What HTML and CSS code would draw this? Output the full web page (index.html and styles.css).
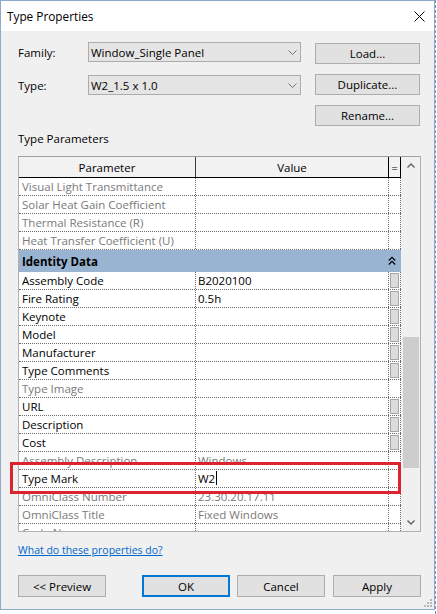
FILE: index.html
```html
<!DOCTYPE html>
<html>
<head>
<meta charset="utf-8">
<title>Type Properties</title>
<link rel="stylesheet" href="styles.css">
</head>
<body>
<div class="page">
  <div class="dialog">
    <div class="titlebar">
      <span class="title">Type Properties</span>
      <svg class="close" width="11" height="11" viewBox="0 0 11 11"><path d="M0.5 0.5 L10.5 10.5 M10.5 0.5 L0.5 10.5" stroke="#000" stroke-width="1" fill="none"/></svg>
    </div>
    <div class="content">
      <div class="toprow">
        <div class="fields">
          <div class="field">
            <span class="label">Family:</span>
            <div class="combo"><span class="combo-text">Window_Single Panel</span><svg class="chev" width="9" height="5" viewBox="0 0 9 5"><path d="M0.5 0.5 L4.5 4.5 L8.5 0.5" stroke="#707070" fill="none"/></svg></div>
          </div>
          <div class="field">
            <span class="label">Type:</span>
            <div class="combo"><span class="combo-text">W2_1.5 x 1.0</span><svg class="chev" width="9" height="5" viewBox="0 0 9 5"><path d="M0.5 0.5 L4.5 4.5 L8.5 0.5" stroke="#707070" fill="none"/></svg></div>
          </div>
        </div>
        <div class="sidebtns">
          <button class="btn side">Load...</button>
          <button class="btn side">Duplicate...</button>
          <button class="btn side">Rename...</button>
        </div>
      </div>
      <div class="section-label">Type Parameters</div>
      <div class="table">
        <div class="grid">
          <div class="hdr">
            <div class="h1">Parameter</div>
            <div class="h2">Value</div>
            <div class="h3">=</div>
          </div>
          <div class="row dim"><div class="c1">Visual Light Transmittance</div><div class="c2"></div><div class="c3"></div></div>
          <div class="row dim"><div class="c1">Solar Heat Gain Coefficient</div><div class="c2"></div><div class="c3"></div></div>
          <div class="row dim"><div class="c1">Thermal Resistance (R)</div><div class="c2"></div><div class="c3"></div></div>
          <div class="row dim"><div class="c1">Heat Transfer Coefficient (U)</div><div class="c2"></div><div class="c3"></div></div>
          <div class="group">
            <span class="group-name">Identity Data</span>
            <svg class="collapse" width="8" height="10" viewBox="0 0 8 10"><path d="M0.8 4.5 L4 1.3 L7.2 4.5 M0.8 8.5 L4 5.3 L7.2 8.5" stroke="#000" stroke-width="1.2" fill="none"/></svg>
          </div>
          <div class="row"><div class="c1">Assembly Code</div><div class="c2">B2020100</div><div class="c3"><span class="cellbtn"></span></div></div>
          <div class="row"><div class="c1">Fire Rating</div><div class="c2">0.5h</div><div class="c3"><span class="cellbtn"></span></div></div>
          <div class="row"><div class="c1">Keynote</div><div class="c2"></div><div class="c3"><span class="cellbtn"></span></div></div>
          <div class="row"><div class="c1">Model</div><div class="c2"></div><div class="c3"><span class="cellbtn"></span></div></div>
          <div class="row"><div class="c1">Manufacturer</div><div class="c2"></div><div class="c3"><span class="cellbtn"></span></div></div>
          <div class="row"><div class="c1">Type Comments</div><div class="c2"></div><div class="c3"><span class="cellbtn"></span></div></div>
          <div class="row dim"><div class="c1">Type Image</div><div class="c2"></div><div class="c3"></div></div>
          <div class="row"><div class="c1">URL</div><div class="c2"></div><div class="c3"><span class="cellbtn"></span></div></div>
          <div class="row"><div class="c1">Description</div><div class="c2"></div><div class="c3"><span class="cellbtn"></span></div></div>
          <div class="row"><div class="c1">Cost</div><div class="c2"></div><div class="c3"><span class="cellbtn"></span></div></div>
          <div class="row dim"><div class="c1">Assembly Description</div><div class="c2">Windows</div><div class="c3"></div></div>
          <div class="row"><div class="c1">Type Mark</div><div class="c2">W2<span class="caret"></span></div><div class="c3"></div></div>
          <div class="row dim"><div class="c1">OmniClass Number</div><div class="c2">23.30.20.17.11</div><div class="c3"></div></div>
          <div class="row dim"><div class="c1">OmniClass Title</div><div class="c2">Fixed Windows</div><div class="c3"></div></div>
          <div class="row dim"><div class="c1">Code Name</div><div class="c2"></div><div class="c3"></div></div>
        </div>
        <div class="scrollbar">
          <div class="sb-arrow"><svg width="8" height="5" viewBox="0 0 8 5"><path d="M0.5 4.5 L4 1 L7.5 4.5" stroke="#606060" stroke-width="1.4" fill="none"/></svg></div>
          <div class="sb-track"><div class="sb-thumb"></div></div>
          <div class="sb-arrow"><svg width="8" height="5" viewBox="0 0 8 5"><path d="M0.5 0.5 L4 4 L7.5 0.5" stroke="#606060" stroke-width="1.4" fill="none"/></svg></div>
        </div>
      </div>
      <a class="help" href="#">What do these properties do?</a>
      <div class="bottom">
        <button class="btn foot">&lt;&lt; Preview</button>
        <button class="btn foot ok">OK</button>
        <button class="btn foot cancel">Cancel</button>
        <button class="btn foot apply">Apply</button>
      </div>
    </div>
    <div class="highlight"></div>
    <svg class="grip" width="8" height="8" viewBox="0 0 8 8">
      <rect x="6" y="0" width="2" height="2" fill="#b8b8b8"/>
      <rect x="3" y="3" width="2" height="2" fill="#b8b8b8"/>
      <rect x="6" y="3" width="2" height="2" fill="#b8b8b8"/>
      <rect x="0" y="6" width="2" height="2" fill="#b8b8b8"/>
      <rect x="3" y="6" width="2" height="2" fill="#b8b8b8"/>
      <rect x="6" y="6" width="2" height="2" fill="#b8b8b8"/>
    </svg>
  </div>
  <div class="behind"></div>
</div>
</body>
</html>
```

FILE: styles.css
```css
* { box-sizing: border-box; }

html, body {
  margin: 0;
  padding: 0;
  background: #ffffff;
}

body {
  font-family: "Open Sans", "Noto Sans", sans-serif;
  font-size: 11.5px;
  color: #000;
}

.page {
  display: flex;
  align-items: flex-start;
}

.dialog {
  position: relative;
  width: 435px;
  height: 610px;
  border: 1px solid #8ea9cc;
  background: #f0f0f0;
  flex: none;
}

.titlebar {
  height: 30px;
  background: #ffffff;
  display: flex;
  align-items: center;
  padding-left: 6px;
}

.title {
  font-size: 11.8px;
}

.close {
  margin-left: auto;
  margin-right: 9px;
  display: block;
}

.content {
  padding: 11px 13px 0 17px;
}

.toprow {
  display: flex;
  align-items: flex-start;
}

.fields {
  width: 283px;
  display: flex;
  flex-direction: column;
  gap: 13px;
}

.field {
  display: flex;
  align-items: center;
  height: 20px;
}

.label {
  width: 70px;
  flex: none;
}

.combo {
  width: 213px;
  height: 20px;
  border: 1px solid #acacac;
  background: #e5e5e5;
  display: flex;
  align-items: center;
  padding-left: 2px;
  padding-right: 3px;
}

.combo-text {
  flex: 1;
  white-space: nowrap;
}

.chev {
  display: block;
}

.sidebtns {
  margin-left: 14px;
  margin-top: 1px;
  display: flex;
  flex-direction: column;
  gap: 10px;
}

.btn {
  font-family: "Open Sans", "Noto Sans", sans-serif;
  font-size: 11.5px;
  color: #000;
  background: #e1e1e1;
  border: 1px solid #adadad;
  padding: 0;
  margin: 0;
  display: flex;
  align-items: center;
  justify-content: center;
}

.side {
  width: 105px;
  height: 21px;
}

.section-label {
  margin-top: 5px;
  height: 17px;
  line-height: 16px;
}

.table {
  margin-top: 8px;
  width: 403px;
  height: 376px;
  border: 1px solid #b0b0b0;
  border-top-color: #a0a0a0;
  background: #ffffff;
  display: flex;
}

.grid {
  width: 382px;
  height: 374px;
  overflow: hidden;
  flex: none;
}

.hdr {
  display: flex;
  height: 21px;
  background: #f2f2f2;
  border-bottom: 1px solid #000;
}

.hdr > div {
  display: flex;
  align-items: center;
  justify-content: center;
}

.h1 {
  width: 177px;
  border-right: 1px solid #3c3c3c;
}

.h2 {
  width: 193px;
  border-right: 1px solid #000;
}

.h3 {
  width: 12px;
  border-right: 1px solid #000;
}

.row {
  display: flex;
  height: 18px;
  border-bottom: 1px dotted #6a6a6a;
  background: #fff;
}

.row > div {
  display: flex;
  align-items: center;
  white-space: nowrap;
  overflow: hidden;
  padding-bottom: 1px;
}

.c1 {
  width: 177px;
  padding-left: 3px;
  border-right: 1px dotted #6a6a6a;
}

.c2 {
  width: 193px;
  padding-left: 2px;
  border-right: 1px dotted #6a6a6a;
}

.row > .c3 {
  width: 12px;
  border-right: 1px dotted #6a6a6a;
  padding-left: 1px;
  padding-bottom: 0;
}

.row.dim {
  color: #7a7a7a;
}

.cellbtn {
  display: block;
  width: 9px;
  height: 15px;
  background: #dcdcdc;
  border: 1px solid #a6a6a6;
}

.caret {
  display: inline-block;
  width: 1px;
  height: 14px;
  background: #000;
  margin-left: 1px;
}

.group {
  height: 22px;
  background: #99b4d1;
  display: flex;
  align-items: center;
  padding-left: 3px;
}

.group-name {
  font-weight: bold;
  flex: 1;
}

.collapse {
  display: block;
  margin-right: 5px;
}

.scrollbar {
  width: 19px;
  height: 374px;
  background: #f0f0f0;
  display: flex;
  flex-direction: column;
}

.sb-arrow {
  height: 17px;
  display: flex;
  align-items: center;
  justify-content: center;
  padding-left: 1px;
}

.sb-arrow svg {
  display: block;
}

.sb-track {
  flex: 1;
}

.sb-thumb {
  margin-top: 163px;
  margin-left: 2px;
  width: 16px;
  height: 131px;
  background: #cdcdcd;
}

.help {
  display: block;
  width: max-content;
  margin-top: 10px;
  height: 16px;
  line-height: 16px;
  font-size: 10.5px;
  color: #0066cc;
  text-decoration: underline;
}

.bottom {
  margin-top: 17px;
  display: flex;
}

.foot {
  width: 88px;
  height: 22px;
}

.ok {
  margin-left: 36px;
  border: 2px solid #0078d7;
}

.cancel {
  margin-left: 7px;
}

.apply {
  margin-left: 8px;
}

.highlight {
  position: absolute;
  left: 9px;
  top: 461px;
  width: 391px;
  height: 32px;
  border: 3px solid #dc2430;
  pointer-events: none;
}

.grip {
  position: absolute;
  right: 2px;
  bottom: 2px;
  display: block;
}

.behind {
  width: 2px;
  height: 614px;
  border-left: 1px dashed #6f95c8;
}
```
